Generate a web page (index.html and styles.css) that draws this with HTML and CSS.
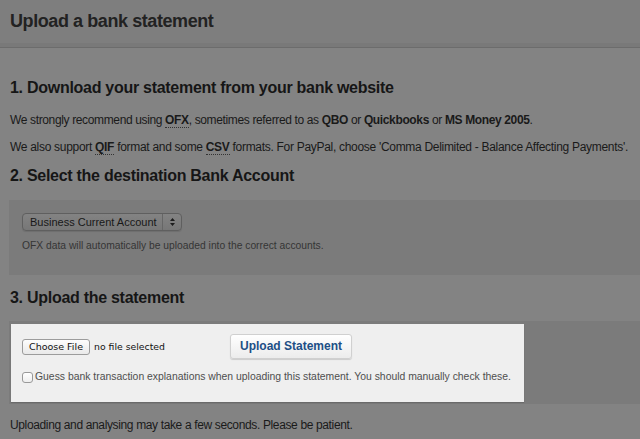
FILE: index.html
```html
<!DOCTYPE html>
<html>
<head>
<meta charset="utf-8">
<link rel="stylesheet" href="styles.css">
</head>
<body>
<header class="page-header">
  <h1 class="page-title">Upload a bank statement</h1>
</header>
<main class="content">
  <h2 class="step">1. Download your statement from your bank website</h2>
  <p class="text p1">We strongly recommend using <abbr>OFX</abbr>, sometimes referred to as <b>QBO</b> or <b>Quickbooks</b> or <b>MS Money 2005</b>.</p>
  <p class="text p2">We also support <abbr>QIF</abbr> format and some <abbr>CSV</abbr> formats. For PayPal, choose 'Comma Delimited - Balance Affecting Payments'.</p>
  <h2 class="step s2">2. Select the destination Bank Account</h2>
  <section class="panel account-panel">
    <div class="select">
      <span class="select-label">Business Current Account</span>
      <span class="select-arrows">
        <svg width="7" height="10" viewBox="0 0 7 10"><path d="M3.5 1 L6 4 H1 Z M3.5 9 L6 6 H1 Z" fill="#1c1c1c"/></svg>
      </span>
    </div>
    <p class="hint">OFX data will automatically be uploaded into the correct accounts.</p>
  </section>
  <h2 class="step s3">3. Upload the statement</h2>
  <section class="panel upload-panel">
    <div class="spotlight">
      <div class="upload-row">
        <div class="file-group">
          <span class="file-btn">Choose File</span>
          <span class="file-name">no file selected</span>
        </div>
        <span class="submit-btn">Upload Statement</span>
      </div>
      <label class="guess-row">
        <span class="checkbox"></span>
        <span>Guess bank transaction explanations when uploading this statement. You should manually check these.</span>
      </label>
    </div>
  </section>
  <p class="text footer-note">Uploading and analysing may take a few seconds. Please be patient.</p>
</main>
</body>
</html>
```
FILE: styles.css
```css
html, body {
  margin: 0;
  padding: 0;
}
body {
  background: #838383;
  font-family: "Liberation Sans", Arial, sans-serif;
  color: #141414;
  width: 640px;
  height: 439px;
  overflow: hidden;
}
.page-header {
  height: 43px;
  background: #7e7e7e;
  border-bottom: 4px solid #797979;
  box-shadow: 0 1px 0 #6c6c6c;
  padding-left: 10px;
  display: flex;
  align-items: center;
}
.page-title {
  margin: 0;
  font-size: 18px;
  font-weight: bold;
  color: #222;
  line-height: 22px;
  letter-spacing: -0.42px;
  padding-bottom: 2px;
}
.content {
  padding-left: 9px;
}
.step {
  margin: 0;
  padding-left: 1px;
  font-size: 16px;
  line-height: 20px;
  font-weight: bold;
  letter-spacing: -0.28px;
  color: #161616;
  white-space: nowrap;
}
.content > .step:first-child {
  margin-top: 31px;
}
.text {
  margin: 0;
  padding-left: 1px;
  font-size: 12px;
  line-height: 16px;
  letter-spacing: -0.36px;
  color: #1a1a1a;
  white-space: nowrap;
}
.text b, .text abbr {
  font-weight: bold;
}
.text abbr {
  text-decoration: none;
  border-bottom: 1px dotted #333;
}
.p1 { margin-top: 14px; }
.p2 { margin-top: 11px; }
.p2 { letter-spacing: -0.3px; }
.s2 { margin-top: 11px; }
.panel {
  background: #7b7b7b;
}
.account-panel {
  margin-top: 14px;
  padding: 13px 13px 22px;
}
.select {
  width: 158px;
  height: 16px;
  border: 1px solid #5f5f5f;
  border-radius: 4px;
  background: linear-gradient(#838383, #777);
  display: flex;
  align-items: center;
  box-shadow: 0 1px 1px rgba(0,0,0,0.1);
}
.select-label {
  flex: 1;
  padding-left: 7px;
  font-size: 11px;
  color: #181818;
  line-height: 16px;
  white-space: nowrap;
}
.select-arrows {
  width: 18px;
  height: 16px;
  border-left: 1px solid #666;
  display: flex;
  align-items: center;
  justify-content: center;
}
.hint {
  margin: 8px 0 0;
  font-size: 10.3px;
  line-height: 14px;
  color: #353535;
  white-space: nowrap;
}
.s3 { margin-top: 13px; }
.upload-panel {
  margin-top: 13px;
  padding: 3px 0 2px 2px;
}
.spotlight {
  width: 502px;
  background: #efefef;
  padding: 10px 0 18px 11px;
  box-shadow: 0 1px 1px #6a6a6a;
}
.upload-row {
  display: flex;
  align-items: center;
  height: 25px;
}
.file-group {
  width: 208px;
  display: flex;
  align-items: center;
}
.file-btn {
  box-sizing: border-box;
  height: 16px;
  padding: 0 6px;
  border: 1px solid #9c9c9c;
  border-radius: 3px;
  background: linear-gradient(#fdfdfd, #e9e9e9);
  font-family: "DejaVu Sans", sans-serif;
  font-size: 9.5px;
  line-height: 14px;
  color: #111;
}
.file-name {
  margin-left: 4px;
  font-family: "DejaVu Sans", sans-serif;
  font-size: 9.3px;
  color: #111;
}
.submit-btn {
  box-sizing: border-box;
  height: 25px;
  padding: 0 9px;
  border: 1px solid #d0d0d0;
  border-radius: 3px;
  background: linear-gradient(#ffffff, #ececec);
  box-shadow: 0 1px 1px rgba(0,0,0,0.15);
  font-size: 12px;
  font-weight: bold;
  line-height: 23px;
  color: #1d4f86;
}
.guess-row {
  margin-top: 11px;
  display: flex;
  align-items: center;
  font-size: 10.4px;
  line-height: 14px;
  color: #4e4e4e;
  white-space: nowrap;
}
.checkbox {
  box-sizing: border-box;
  width: 11px;
  height: 11px;
  border: 1px solid #999;
  border-radius: 3px;
  background: linear-gradient(#fff, #eee);
  margin-right: 2px;
}
.footer-note {
  margin-top: 13px;
}
```
